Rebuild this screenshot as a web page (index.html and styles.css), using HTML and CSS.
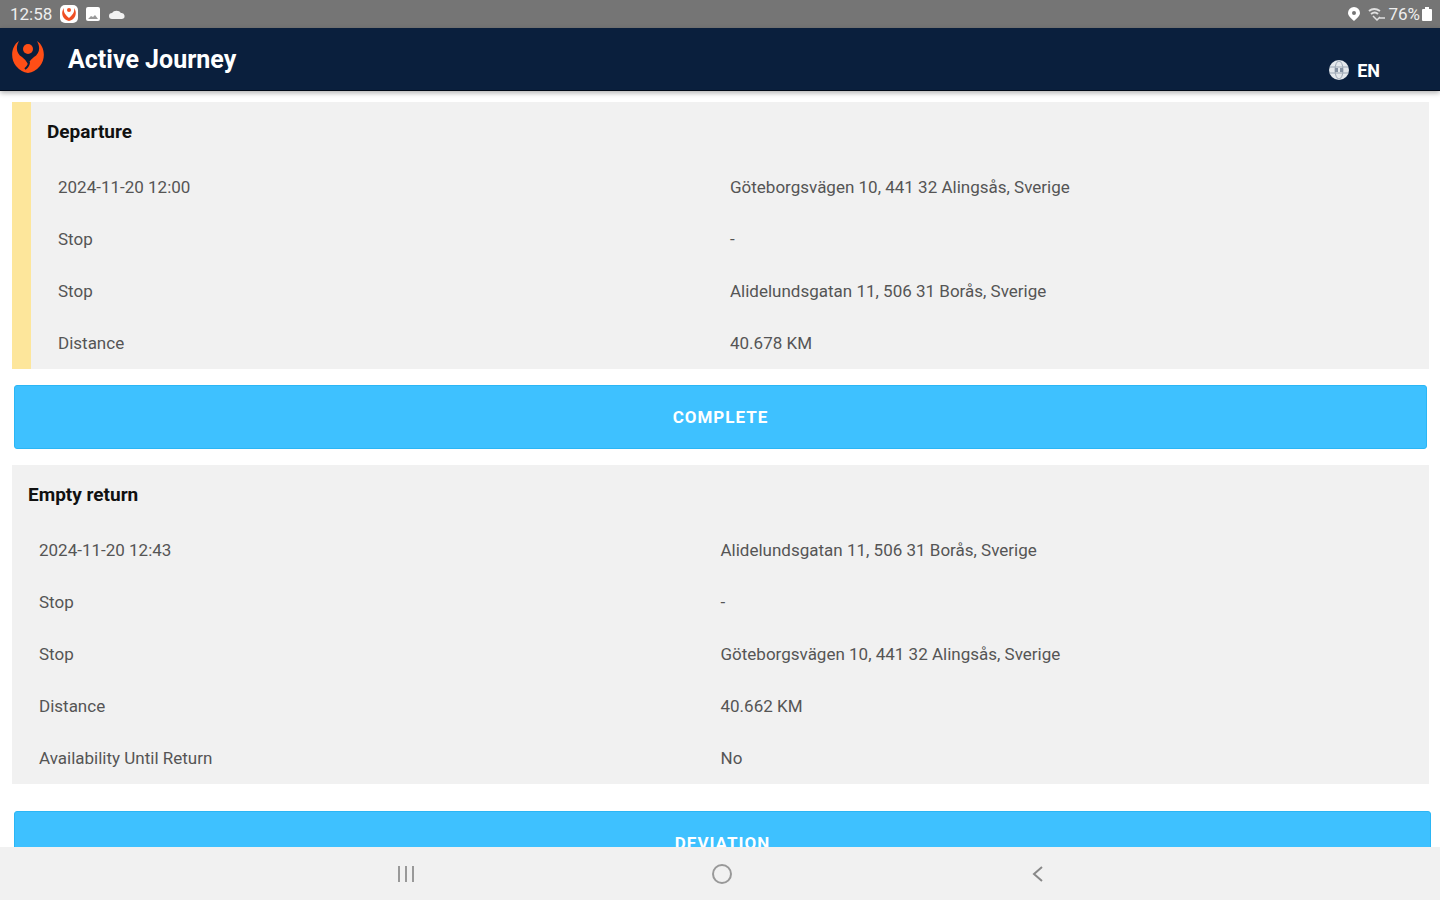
FILE: index.html
```html
<!DOCTYPE html>
<html lang="en">
<head>
    <meta charset="UTF-8">
    <meta name="viewport" content="width=device-width, initial-scale=1.0">
    <title>Active Journey</title>
    <link rel="stylesheet" href="styles.css">
</head>
<body>
    <div class="status-bar">
        <div class="status-group">
            <span>12:58</span>
            <svg width="18" height="18" viewBox="0 0 18 18">
                <rect width="18" height="18" rx="5" fill="#fff"/>
                <path d="M4 3C0 8 3 15 9 16C15 15 18 8 14 3C15 8 12 10 9 13C6 10 3 8 4 3Z" fill="#f04e23"/>
                <circle cx="9" cy="5" r="2" fill="#f04e23"/>
            </svg>
            <svg width="14" height="14" viewBox="0 0 14 14">
                <rect width="14" height="14" rx="2" fill="#fff"/>
                <path d="M2 12L5 9L7 10L9 8L12 12Z" fill="#999"/>
            </svg>
            <svg width="18" height="12" viewBox="0 0 18 12">
                <path d="M4 11a3 3 0 0 1 0-6a5 4 0 0 1 9 0a3 3 0 0 1 1 6Z" fill="#f2f2f2"/>
            </svg>
        </div>
        <div class="status-group status-right">
            <svg width="12" height="14" viewBox="0 0 12 14">
                <path fill-rule="evenodd" d="M6 0a6 6 0 0 1 6 6c0 3-3 5-6 8C3 11 0 9 0 6a6 6 0 0 1 6-6ZM6 4a2 2 0 1 0 0 4a2 2 0 0 0 0-4Z" fill="#fff"/>
            </svg>
            <svg class="wifi" width="18" height="14" viewBox="0 0 18 14" fill="none" stroke="#e0e0e0" stroke-width="2">
                <path d="M1 4Q6 0 12 4M3 7Q7 4 10 7"/>
                <path d="M5 9L9 13L12 10M11 11h6" stroke-width="1.5"/>
            </svg>
            <span>76%</span>
            <svg width="10" height="14" viewBox="0 0 10 14">
                <path d="M3 0h4v2h2q1 0 1 1v10q0 1-1 1H1q-1 0-1-1V3q0-1 1-1h2Z" fill="#fff"/>
            </svg>
        </div>
    </div>

    <header class="app-header">
        <svg class="logo" width="32" height="34" viewBox="0 0 32 34">
            <path d="M7 1C-1 6-2 19 4 26Q9 32 16 33Q23 32 28 26C34 19 33 6 25 1C29 8 27 14 22 17Q19 19 16 24Q13 19 10 17C5 14 3 8 7 1Z" fill="#ff4e16"/>
            <path d="M17 22Q17 26 13 29" fill="none" stroke="#0a1f3d" stroke-width="2"/>
            <circle cx="16" cy="9" r="5" fill="#ff4e16"/>
        </svg>
        <h1>Active Journey</h1>
        <button class="language" type="button">
            <svg width="20" height="20" viewBox="0 0 20 20">
                <circle cx="10" cy="10" r="10" fill="#e4e8ec"/>
                <g fill="none" stroke="#9ba6b3">
                    <ellipse cx="10" cy="10" rx="4" ry="9"/>
                    <path d="M1 7h18M1 13h18"/>
                </g>
                <path d="M6 8h3v4H6ZM11 8h3v4h-3Z" fill="#8390a1"/>
            </svg>
            EN
        </button>
    </header>

    <main class="journey">
        <section class="card card-active">
            <h2>Departure</h2>
            <table>
                <tr><th scope="row">2024-11-20 12:00</th><td>Göteborgsvägen 10, 441 32 Alingsås, Sverige</td></tr>
                <tr><th scope="row">Stop</th><td>-</td></tr>
                <tr><th scope="row">Stop</th><td>Alidelundsgatan 11, 506 31 Borås, Sverige</td></tr>
                <tr><th scope="row">Distance</th><td>40.678 KM</td></tr>
            </table>
        </section>

        <button class="action" type="button">COMPLETE</button>

        <section class="card">
            <h2>Empty return</h2>
            <table>
                <tr><th scope="row">2024-11-20 12:43</th><td>Alidelundsgatan 11, 506 31 Borås, Sverige</td></tr>
                <tr><th scope="row">Stop</th><td>-</td></tr>
                <tr><th scope="row">Stop</th><td>Göteborgsvägen 10, 441 32 Alingsås, Sverige</td></tr>
                <tr><th scope="row">Distance</th><td>40.662 KM</td></tr>
                <tr><th scope="row">Availability Until Return</th><td>No</td></tr>
            </table>
        </section>

        <button class="action action-last" type="button">DEVIATION</button>
    </main>

    <nav class="system-nav">
        <button type="button" aria-label="Recent apps">
            <svg width="18" height="18" viewBox="0 0 18 18" stroke="#999" stroke-width="2">
                <path d="M2 1v16M9 1v16M16 1v16"/>
            </svg>
        </button>
        <button type="button" aria-label="Home">
            <svg width="20" height="20" viewBox="0 0 20 20" fill="none" stroke="#999" stroke-width="2">
                <circle cx="10" cy="10" r="9"/>
            </svg>
        </button>
        <button type="button" aria-label="Back">
            <svg width="12" height="18" viewBox="0 0 12 18" fill="none" stroke="#888" stroke-width="2">
                <path d="M10 2L2 9L10 16"/>
            </svg>
        </button>
    </nav>
</body>
</html>
```
FILE: styles.css
```css
* {
    box-sizing: border-box;
}

body {
    display: flex;
    flex-direction: column;
    height: 100vh;
    margin: 0;
    background-color: #fff;
    color: #555;
    font-family: Roboto, sans-serif;
    font-size: 17px;
}

button {
    border: none;
    font-family: inherit;
    cursor: pointer;
}

.status-bar {
    display: flex;
    flex-shrink: 0;
    justify-content: space-between;
    align-items: center;
    height: 28px;
    padding: 0 8px 0 10px;
    background-color: #757575;
    color: #eee;
}

.status-group {
    display: flex;
    align-items: center;
    gap: 8px;
}

.status-right {
    gap: 2px;
}

.wifi {
    margin-left: 6px;
}

.app-header {
    display: flex;
    flex-shrink: 0;
    align-items: center;
    height: 63px;
    padding: 0 60px 0 12px;
    background-color: #0a1f3d;
    border-bottom: 1px solid #020a18;
    box-shadow: 0 2px 5px rgba(0, 0, 0, 0.3);
    color: #fff;
    z-index: 1;
}

.logo {
    margin-bottom: 4px;
}

.app-header h1 {
    margin: 0 auto 0 24px;
    font-size: 25px;
    font-weight: 700;
}

.language {
    display: flex;
    align-items: center;
    gap: 8px;
    padding: 0;
    margin-top: 22px;
    background: none;
    color: #fff;
    font-size: 18px;
    font-weight: 700;
}

.journey {
    display: flex;
    flex: 1;
    flex-direction: column;
    min-height: 0;
    padding: 11px 11px 0 12px;
    overflow: hidden;
}

.card {
    flex-shrink: 0;
    padding: 16px 16px 0;
    background-color: #f1f1f1;
}

.card-active {
    border-left: 19px solid #fde69b;
}

.card h2 {
    margin: 0 0 15px;
    color: #111;
    font-size: 19px;
    font-weight: 700;
    line-height: 28px;
}

.card table {
    width: 100%;
    table-layout: fixed;
    border-collapse: collapse;
}

.card th,
.card td {
    height: 52px;
    padding: 0;
    font-weight: 400;
    text-align: left;
}

.card th {
    padding-left: 11px;
}

.action {
    flex-shrink: 0;
    height: 64px;
    margin: 16px 2px;
    background-color: #3ec1ff;
    border: 1px solid #2bb6f5;
    border-radius: 3px;
    color: #fff;
    font-size: 17px;
    font-weight: 700;
    letter-spacing: 1px;
}

.action-last {
    margin: 27px -2px 0 2px;
}

.system-nav {
    display: flex;
    flex-shrink: 0;
    justify-content: center;
    gap: 276px;
    height: 53px;
    padding-left: 4px;
    background-color: #f1f1f1;
}

.system-nav button {
    display: flex;
    justify-content: center;
    align-items: center;
    width: 40px;
    padding: 0;
    background: none;
}
```
